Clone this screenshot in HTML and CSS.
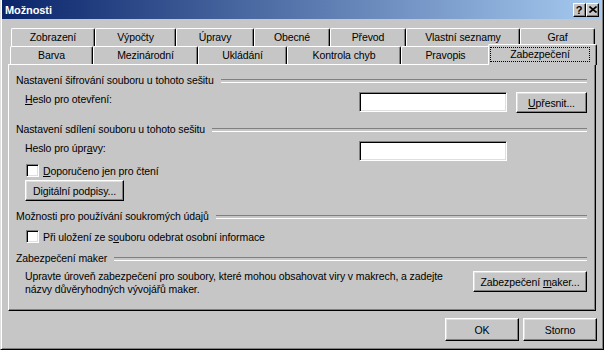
FILE: index.html
```html
<!DOCTYPE html>
<html lang="cs">
<head>
    <meta charset="UTF-8">
    <title>Možnosti</title>
    <link rel="stylesheet" href="styles.css">
</head>
<body>
    <div class="window">
        <!-- Titulek okna -->
        <div class="titlebar">
            <span class="title">Možnosti</span>
            <div class="caption-buttons">
                <span class="cap-btn cap-help">?</span>
                <span class="cap-btn cap-close">
                    <svg width="8" height="7" viewBox="0 0 8 7"><path d="M0.5 0.5 L7.5 6.5 M7.5 0.5 L0.5 6.5" stroke="#000" stroke-width="1.6" fill="none"/></svg>
                </span>
            </div>
        </div>

        <!-- Záložky -->
        <div class="tabs">
            <div class="tab-row tab-row-back">
                <div class="tab">Zobrazení</div>
                <div class="tab">Výpočty</div>
                <div class="tab">Úpravy</div>
                <div class="tab">Obecné</div>
                <div class="tab">Převod</div>
                <div class="tab">Vlastní seznamy</div>
                <div class="tab">Graf</div>
            </div>
            <div class="tab-row tab-row-front">
                <div class="tab">Barva</div>
                <div class="tab">Mezinárodní</div>
                <div class="tab">Ukládání</div>
                <div class="tab">Kontrola chyb</div>
                <div class="tab">Pravopis</div>
                <div class="tab tab-active"><span class="focus">Zabezpečení</span></div>
            </div>
        </div>

        <!-- Obsah záložky Zabezpečení -->
        <div class="panel">
            <div class="group-title"><span>Nastavení šifrování souboru u tohoto sešitu</span></div>
            <div class="field-row row-open">
                <label><u>H</u>eslo pro otevření:</label>
                <span class="textbox"></span>
                <button class="btn btn-small"><u>U</u>přesnit...</button>
            </div>

            <div class="group-title group-share"><span>Nastavení sdílení souboru u tohoto sešitu</span></div>
            <div class="field-row row-edit">
                <label>Heslo pro úpr<u>a</u>vy:</label>
                <span class="textbox"></span>
            </div>
            <div class="check-row check-readonly">
                <span class="check"></span>
                <span><u>D</u>oporučeno jen pro čtení</span>
            </div>
            <button class="btn btn-sign">Di<u>g</u>itální podpisy...</button>

            <div class="group-title group-privacy"><span>Možnosti pro používání soukromých údajů</span></div>
            <div class="check-row check-privacy">
                <span class="check"></span>
                <span>Při uložení ze s<u>o</u>uboru odebrat osobní informace</span>
            </div>

            <div class="group-title group-macro"><span>Zabezpečení maker</span></div>
            <div class="macro-row">
                <p>Upravte úroveň zabezpečení pro soubory, které mohou obsahovat viry v makrech, a zadejte<br>názvy důvěryhodných vývojářů maker.</p>
                <button class="btn btn-macro">Zabezpečení <u>m</u>aker...</button>
            </div>
        </div>

        <!-- Tlačítka dialogu -->
        <div class="footer">
            <button class="btn btn-dialog">OK</button>
            <button class="btn btn-dialog">Storno</button>
        </div>
    </div>
</body>
</html>
```

FILE: styles.css
```css
/* Klasický vzhled Windows */
* {
    box-sizing: border-box;
}

body {
    margin: 0;
    background: #c6c6c6;
    font-family: "Liberation Sans", Arial, sans-serif;
    font-size: 10.5px;
    letter-spacing: -0.1px;
    color: #000;
}

.window {
    width: 604px;
    height: 350px;
    background: #c6c6c6;
    border-left: 1px solid #dfdfdf;
    border-right: 1px solid #000;
    border-bottom: 1px solid #000;
    box-shadow: inset 1px 0 #fff, inset -1px -1px #808080;
    display: flex;
    flex-direction: column;
    overflow: hidden;
}

/* Titulek */
.titlebar {
    height: 19px;
    margin: 0 1px;
    padding: 0 3px 0 3px;
    background: linear-gradient(to right, #0a246a, #a6caf0);
    display: flex;
    align-items: center;
    justify-content: space-between;
}

.title {
    color: #fff;
    font-weight: bold;
    font-size: 11px;
}

.caption-buttons {
    display: flex;
}

.cap-btn {
    width: 13px;
    height: 14px;
    background: #c6c6c6;
    border-top: 1px solid #fff;
    border-left: 1px solid #fff;
    border-right: 1px solid #000;
    border-bottom: 1px solid #000;
    box-shadow: inset -1px -1px #808080;
    display: flex;
    align-items: center;
    justify-content: center;
}

.cap-help {
    font-weight: bold;
    font-size: 11px;
    line-height: 12px;
    padding-right: 1px;
}

/* Záložky */
.tabs {
    margin-top: 9px;
    position: relative;
    z-index: 2;
}

.tab-row {
    display: grid;
    grid-template-rows: 18px;
}

.tab-row-back {
    grid-template-columns: 84px 81px 78px 76px 76px 114px 75px;
    margin-left: 10px;
}

.tab-row-front {
    grid-template-columns: 83px 105px 89px 114px 89px 105px;
    margin-left: 9px;
}

.tab {
    border-top: 1px solid #fff;
    border-left: 1px solid #fff;
    border-right: 1px solid #000;
    border-radius: 2px 2px 0 0;
    box-shadow: inset -1px 0 #808080;
    background: #c6c6c6;
    text-align: center;
    line-height: 16px;
    white-space: nowrap;
}

.tab-active {
    margin: -2px -2px -1px -2px;
    padding-top: 2px;
    line-height: 15px;
}

.focus {
    display: inline-block;
    width: 100px;
    height: 15px;
    margin-left: -5px;
    outline: 1px dotted #000;
    outline-offset: -1px;
}

/* Panel */
.panel {
    margin: 0 7px;
    height: 247px;
    border: 1px solid;
    border-color: #fff #000 #000 #fff;
    box-shadow: inset -1px -1px #808080;
    padding: 9px 8px 0 7px;
}

.group-title {
    display: flex;
    align-items: center;
    height: 13px;
    line-height: 13px;
    white-space: nowrap;
}

.group-title::after {
    content: "";
    flex: 1;
    height: 2px;
    margin-left: 7px;
    border-top: 1px solid #808080;
    border-bottom: 1px solid #fff;
}

.group-share {
    margin-top: 10px;
}

.group-privacy {
    margin-top: 9px;
}

.group-macro {
    margin-top: 9px;
}

.field-row {
    display: grid;
    grid-template-columns: minmax(0, 1fr) 148px 71px;
    column-gap: 9px;
    align-items: start;
    margin-top: 5px;
    padding-left: 9px;
    height: 21px;
}

.field-row label {
    line-height: 13px;
    padding-top: 1px;
}

.textbox {
    height: 20px;
    background: #fff;
    border: 1px solid;
    border-color: #808080 #fff #fff #808080;
    box-shadow: inset 1px 1px #000, inset -1px -1px #dfdfdf;
}

.row-edit {
    height: 20px;
}

.check-row {
    display: flex;
    align-items: center;
    height: 13px;
    padding-left: 10px;
    white-space: nowrap;
}

.check {
    width: 13px;
    height: 13px;
    margin-right: 4px;
    background: #fff;
    border: 1px solid;
    border-color: #808080 #fff #fff #808080;
    box-shadow: inset 1px 1px #000, inset -1px -1px #dfdfdf;
}

.check-readonly {
    margin-top: 3px;
}

.check-privacy {
    margin-top: 7px;
}

/* Tlačítka */
.btn {
    font-family: inherit;
    font-size: 10.5px;
    letter-spacing: -0.1px;
    color: #000;
    background: #c6c6c6;
    border-top: 1px solid #fff;
    border-left: 1px solid #fff;
    border-right: 1px solid #000;
    border-bottom: 1px solid #000;
    box-shadow: inset -1px -1px #808080, inset 1px 1px #dfdfdf;
    padding: 0;
    margin: 0;
    white-space: nowrap;
}

.btn-small {
    height: 21px;
}

.btn-sign {
    display: block;
    width: 99px;
    height: 21px;
    margin: 3px 0 0 9px;
}

.macro-row {
    display: grid;
    grid-template-columns: minmax(0, 1fr) 114px;
    column-gap: 10px;
    align-items: start;
    margin-top: 5px;
    padding-left: 9px;
}

.macro-row p {
    margin: 0;
    line-height: 13px;
    white-space: nowrap;
}

.btn-macro {
    height: 21px;
    margin-top: 1px;
}

.footer {
    display: flex;
    justify-content: flex-end;
    gap: 4px;
    margin-top: 7px;
    padding-right: 6px;
}

.btn-dialog {
    width: 74px;
    height: 23px;
}
```
